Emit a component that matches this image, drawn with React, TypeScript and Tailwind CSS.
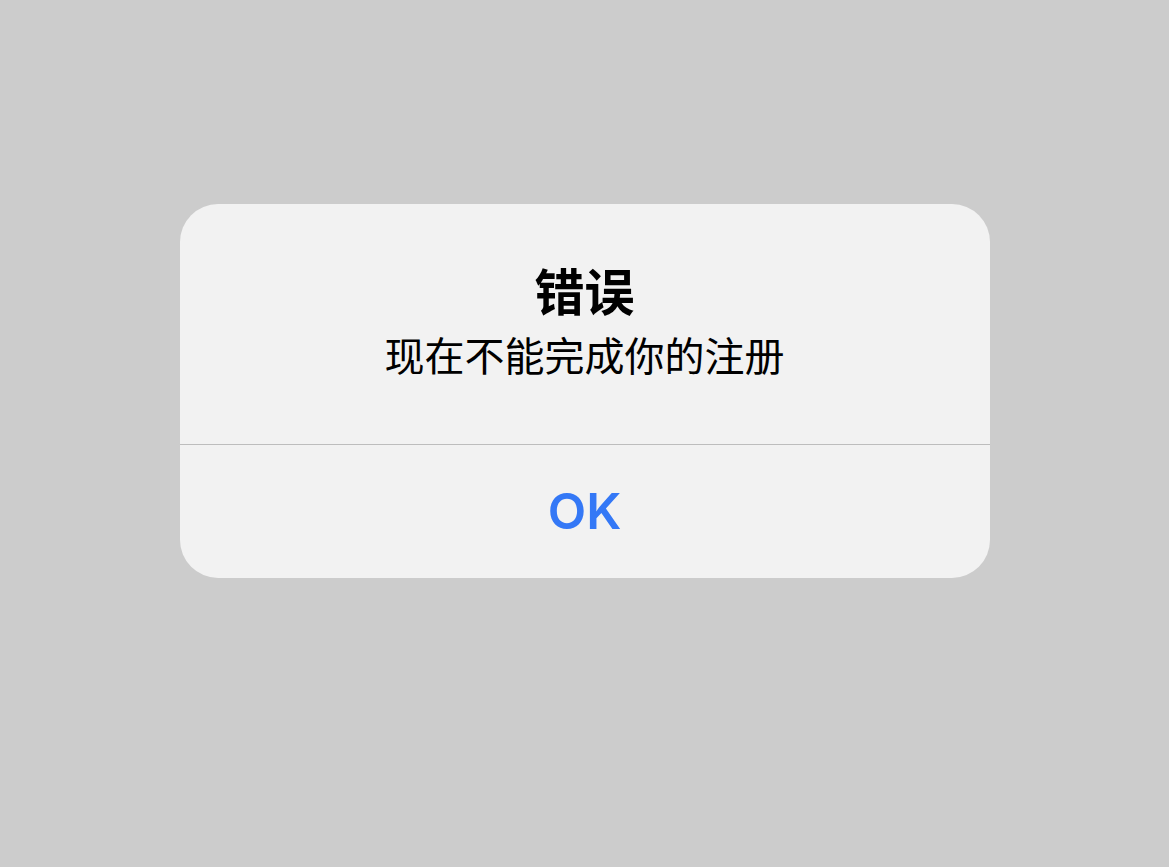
export default function App() {
  return (
    <div className="min-h-[867px] w-full bg-[#cccccc] pt-[204px]">
      <div className="mx-auto flex w-[810px] flex-col overflow-hidden rounded-[38px] bg-[#f2f2f2]">
        {/* Title and message */}
        <div className="flex h-[240px] flex-col items-center pt-[57px] font-['Noto_Sans_CJK_SC',sans-serif] text-black">
          <h1 className="text-[50px] font-bold leading-[56px]">错误</h1>
          <p className="mt-[13px] text-[40px] leading-[48px]">现在不能完成你的注册</p>
        </div>
        <div className="h-px bg-[#bdbdbd]" />
        <button className="flex h-[133px] items-center justify-center font-['Inter',sans-serif] text-[50px] font-semibold text-[#3478f6]">
          OK
        </button>
      </div>
    </div>
  );
}
